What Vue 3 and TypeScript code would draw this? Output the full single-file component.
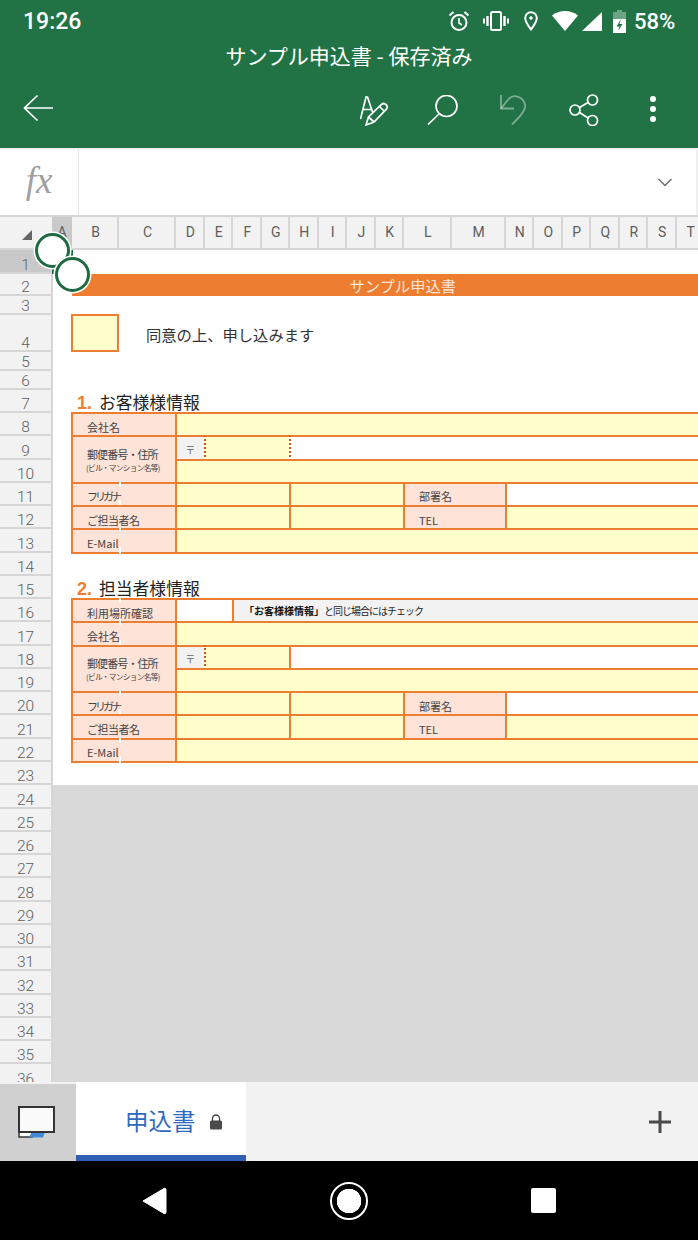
<script setup lang="ts">
type Cell = {
  r: number
  rs?: number
  c: number
  ce: number
  kind: 'label' | 'input' | 'blank' | 'note' | 'zip'
  text?: string
  sub?: string
  dot?: boolean
  seam?: boolean
  // 字間の調整
  track?: number
}

// 列幅 (A〜T)
const colNames = 'ABCDEFGHIJKLMNOPQRST'.split('')
const colWidths = [20, 47, 57, 28.5, 28.5, 28.5, 28.5, 28.5, 28.5, 28.5, 28.5, 47.5, 54, 28.5, 28.5, 28.5, 28.5, 28.5, 28.5, 28.5, 28.5]

// 行の高さ
const std = 23.27
const rowHeights = [24, 22, 19, 37, 19, 19, 23]
for (let i = 8; i <= 36; i++) rowHeights.push(std)

const END = colWidths.length + 1
// A列だけ行見出しの罫線ぶん狭い
const gridCols = colWidths.map((w, i) => (i === 0 ? w - 1 : w) + 'px').join(' ')
const gridRows = rowHeights.slice(0, 23).map(h => h + 'px').join(' ')

// フォーム下部の共通行
const contactRows = (start: number): Cell[] => [
  { r: start, c: 2, ce: 4, kind: 'label', text: 'フリガナ', seam: true, track: -3 },
  { r: start, c: 4, ce: 8, kind: 'input' },
  { r: start, c: 8, ce: 12, kind: 'input' },
  { r: start, c: 12, ce: 14, kind: 'label', text: '部署名' },
  { r: start, c: 14, ce: END, kind: 'blank' },
  { r: start + 1, c: 2, ce: 4, kind: 'label', text: 'ご担当者名', track: -0.5 },
  { r: start + 1, c: 4, ce: 8, kind: 'input' },
  { r: start + 1, c: 8, ce: 12, kind: 'input' },
  { r: start + 1, c: 12, ce: 14, kind: 'label', text: 'TEL' },
  { r: start + 1, c: 14, ce: END, kind: 'input' },
  { r: start + 2, c: 2, ce: 4, kind: 'label', text: 'E-Mail', seam: true },
  { r: start + 2, c: 4, ce: END, kind: 'input' }
]

const cells: Cell[] = [
  // 1. お客様様情報
  { r: 8, c: 2, ce: 4, kind: 'label', text: '会社名' },
  { r: 8, c: 4, ce: END, kind: 'input' },
  { r: 9, rs: 2, c: 2, ce: 4, kind: 'label', text: '郵便番号・住所', sub: '(ビル・マンション名等)', track: -0.9 },
  { r: 9, c: 4, ce: 5, kind: 'zip', text: '〒' },
  { r: 9, c: 5, ce: 8, kind: 'input', dot: true },
  { r: 9, c: 8, ce: END, kind: 'blank', dot: true },
  { r: 10, c: 4, ce: END, kind: 'input' },
  ...contactRows(11),
  // 2. 担当者様情報
  { r: 16, c: 2, ce: 4, kind: 'label', text: '利用場所確認', seam: true },
  { r: 16, c: 4, ce: 6, kind: 'blank' },
  { r: 16, c: 6, ce: END, kind: 'note' },
  { r: 17, c: 2, ce: 4, kind: 'label', text: '会社名', seam: true },
  { r: 17, c: 4, ce: END, kind: 'input' },
  { r: 18, rs: 2, c: 2, ce: 4, kind: 'label', text: '郵便番号・住所', sub: '(ビル・マンション名等)', track: -0.9 },
  { r: 18, c: 4, ce: 5, kind: 'zip', text: '〒' },
  { r: 18, c: 5, ce: 8, kind: 'input', dot: true },
  { r: 18, c: 8, ce: END, kind: 'blank' },
  { r: 19, c: 4, ce: END, kind: 'input' },
  ...contactRows(20)
]

const area = (r: number, rs: number, c: number, ce: number) => ({
  gridArea: `${r} / ${c} / ${r + rs} / ${ce}`
})
</script>

<template>
  <div class="phone">
    <header class="appbar">
      <div class="status">
        <span class="time">19:26</span>
        <svg class="st-alarm" width="22" height="22" viewBox="0 0 22 22" fill="none" stroke="#fff" stroke-width="2">
          <circle cx="11" cy="12.5" r="7.5" />
          <path d="M11 8v5l3 2" stroke-width="1.6" />
          <path d="M1.5 5.5 5.5 2M20.5 5.5 16.5 2" />
        </svg>
        <svg class="st-vib" width="26" height="20" viewBox="0 0 26 20" fill="none" stroke="#fff">
          <rect x="8" y="1" width="10" height="18" rx="1.5" stroke-width="2" />
          <path d="M4.5 5v10M21.5 5v10" stroke-width="2.4" />
          <path d="M1 7.5v5M25 7.5v5" stroke-width="2" />
        </svg>
        <svg class="st-loc" width="14" height="20" viewBox="0 0 14 20" fill="none" stroke="#fff" stroke-width="2">
          <path d="M7 18.5C4 14.5 1.2 11 1.2 7a5.8 5.8 0 0 1 11.6 0c0 4-2.800 7.500-5.800 11.500Z" />
          <circle cx="7" cy="7" r="1.300" fill="#fff" stroke-width="1" />
        </svg>
        <svg class="st-wifi" width="26" height="20" viewBox="0 0 26 20">
          <path d="M13 20 0 4.500C3.500 1.700 8 0 13 0s9.500 1.700 13 4.500Z" fill="#fff" />
        </svg>
        <svg class="st-sig" width="20" height="19" viewBox="0 0 20 19">
          <path d="M0 19 20 0v19Z" fill="#fff" />
        </svg>
        <svg class="st-bat" width="13" height="23" viewBox="0 0 13 23">
          <path d="M4 0h5v2h4v7H0V2h4Z" fill="#fff" opacity=".35" />
          <path d="M0 9h13v14H0Z" fill="#fff" />
          <path d="M8 9 3.500 16.500h3L5 21l4.500-7h-3L8 9Z" fill="#217346" />
        </svg>
        <span class="pct">58%</span>
      </div>
      <div class="title">サンプル申込書 - 保存済み</div>
      <div class="toolbar">
        <svg class="tb-back" width="30" height="28" viewBox="0 0 30 28" fill="none" stroke="#fff" stroke-width="1.700">
          <path d="M30 14H2M14.500 1.500 1.500 14l13 12.500" />
        </svg>
        <svg class="tb-font" width="30" height="30" viewBox="0 0 30 30" fill="none" stroke="#fff" stroke-width="1.700">
          <path d="M0.500 23 6 1h1.500l5 15M3 13.500h9.500" />
          <path d="M6 29 8.500 21 21.500 8.500c1.500-1.300 3.600-1 4.800.3 1.200 1.300 1.200 3.200-.1 4.500L14 26Z" />
          <path d="M8.500 21 14 26M19.500 10.500l5 5" />
        </svg>
        <svg class="tb-search" width="31" height="30" viewBox="0 0 31 30" fill="none" stroke="#fff" stroke-width="1.700">
          <circle cx="19.500" cy="11" r="10.500" />
          <path d="M12 19 1 29.500" />
        </svg>
        <svg class="tb-undo" width="28" height="30" viewBox="0 0 28 30" fill="none" stroke="#fff" stroke-opacity=".42" stroke-width="1.800">
          <path d="M2 0v13.500h13" />
          <path d="M2 13.500 10 3.500c5-4.500 14-2 16 6 1 6-6 13-13 20" />
        </svg>
        <svg class="tb-share" width="30" height="32" viewBox="0 0 30 32" fill="none" stroke="#fff" stroke-width="1.700">
          <circle cx="23.500" cy="6" r="5" />
          <circle cx="6" cy="16" r="5" />
          <circle cx="23.500" cy="26.500" r="5" />
          <path d="M19 8.500 10.500 13.500M10.500 18.500 19 24" />
        </svg>
        <svg class="tb-more" width="8" height="28" viewBox="0 0 8 28" fill="#fff">
          <circle cx="4" cy="4" r="3" />
          <circle cx="4" cy="14" r="3" />
          <circle cx="4" cy="24" r="3" />
        </svg>
      </div>
    </header>

    <div class="formula">
      <div class="fx"><span>fx</span></div>
      <div class="formula-input">
        <svg width="16" height="9" viewBox="0 0 16 9" fill="none" stroke="#6e6e6e" stroke-width="1.500">
          <path d="M1.500 1l6.500 6.500L14.500 1" />
        </svg>
      </div>
    </div>

    <div class="sheet">
      <div class="colhead">
        <div class="corner"><i class="corner-mark"></i></div>
        <div
          v-for="(name, i) in colNames"
          :key="name"
          class="col"
          :class="{ sel: i === 0 }"
          :style="{ width: colWidths[i] + 'px' }"
        >{{ name }}</div>
      </div>

      <div class="body">
        <div class="rowhead">
          <div
            v-for="(h, i) in rowHeights"
            :key="i"
            class="row"
            :class="{ sel: i === 0 }"
            :style="{ height: h + 'px' }"
          ><span>{{ i + 1 }}</span></div>
        </div>

        <div class="canvas">
          <div class="grid" :style="{ gridTemplateColumns: gridCols, gridTemplateRows: gridRows }">
            <div class="banner" :style="area(2, 1, 2, END)">サンプル申込書</div>
            <div class="agree-box" :style="area(4, 1, 2, 3)"></div>
            <div class="agree" :style="area(4, 1, 3, END)">同意の上、申し込みます</div>

            <div class="heading" :style="area(7, 1, 2, END)"><b>1.</b>お客様様情報</div>
            <div class="heading" :style="area(15, 1, 2, END)"><b>2.</b>担当者様情報</div>

            <div
              v-for="(cell, i) in cells"
              :key="i"
              class="cell"
              :class="[cell.kind, { dot: cell.dot, seam: cell.seam, stacked: cell.sub }]"
              :style="area(cell.r, cell.rs ?? 1, cell.c, cell.ce)"
            >
              <template v-if="cell.kind === 'note'">
                <span class="note-text"><strong>「お客様様情報」</strong>と同じ場合にはチェック</span>
              </template>
              <template v-else>
                <span class="txt" :style="cell.track ? { letterSpacing: cell.track + 'px' } : undefined">{{ cell.text }}</span>
                <small v-if="cell.sub">{{ cell.sub }}</small>
              </template>
            </div>
          </div>
          <div class="empty"></div>
        </div>
      </div>

      <!-- 選択範囲とハンドル -->
      <div class="selection"></div>
      <div class="handle h1"></div>
      <div class="handle h2"></div>
    </div>

    <div class="tabs">
      <div class="tab-switch">
        <svg width="37" height="32" viewBox="0 0 37 32">
          <path d="M1 26h13v5H1Z" fill="#fff" stroke="#333" stroke-width="1.500" />
          <path d="M11 31.500l3-6h13l-2 6Z" fill="#3f8bd6" />
          <rect x="1" y="1" width="35" height="25" fill="#fafafa" stroke="#333" stroke-width="2" />
        </svg>
      </div>
      <div class="tab-active">
        <span>申込書</span>
        <svg width="14" height="16" viewBox="0 0 14 16">
          <path d="M3.500 7V4.500a3.500 3.500 0 0 1 7 0V7" fill="none" stroke="#444" stroke-width="1.300" />
          <rect x="1" y="6.500" width="12" height="9" rx="1.500" fill="#4a4a4a" />
        </svg>
      </div>
      <div class="tab-rest">
        <svg width="22" height="22" viewBox="0 0 22 22" stroke="#4a4a4a" stroke-width="3">
          <path d="M0 11h22M11 0v22" />
        </svg>
      </div>
    </div>

    <nav class="navbar">
      <svg width="26" height="28" viewBox="0 0 26 28"><path d="M2 14 23 1.500c1-.5 2 0 2 1v23c0 1-1 1.500-2 1Z" fill="#fff" stroke="#fff" stroke-linejoin="round" /></svg>
      <div class="nav-home"></div>
      <div class="nav-square"></div>
    </nav>
  </div>
</template>

<style scoped>
.phone {
  --jp: "Noto Sans CJK JP", "Noto Sans", sans-serif;
  width: 698px;
  height: 1240px;
  display: flex;
  flex-direction: column;
  overflow: hidden;
  font-family: var(--jp);
  background: #fff;
}

/* ヘッダー */
.appbar {
  height: 148px;
  background: #217346;
  color: #fff;
  flex: none;
}
.status {
  height: 42px;
  display: flex;
  align-items: center;
  padding-left: 23px;
  font-family: Roboto, sans-serif;
  font-weight: 500;
  font-size: 22px;
}
.time { width: 58px; font-size: 23px; }
.st-alarm { margin-left: 367px; }
.st-vib { margin-left: 13px; }
.st-loc { margin-left: 15px; }
.st-wifi { margin-left: 14px; }
.st-sig { margin-left: 4px; }
.st-bat { margin-left: 11px; }
.pct { margin-left: 8px; }

.title {
  height: 30px;
  text-align: center;
  font-size: 21px;
  line-height: 27px;
}
.toolbar {
  height: 76px;
  display: flex;
  align-items: flex-start;
  padding: 17px 0 0 23px;
  box-sizing: border-box;
}
.tb-back { margin-top: 5px; }
.tb-font { margin-left: 307px; margin-top: 7px; }
.tb-search { margin-left: 37px; margin-top: 6px; }
.tb-undo { margin-left: 41px; margin-top: 6px; }
.tb-share { margin-left: 42px; margin-top: 5px; }
.tb-more { margin-left: 50px; margin-top: 6px; }

/* 数式バー */
.formula {
  height: 67px;
  flex: none;
  display: flex;
  border-top: 2px solid #f2f2f2;
  box-sizing: border-box;
}
.fx {
  width: 79px;
  border-right: 1px solid #e4e4e4;
  display: flex;
  align-items: center;
  justify-content: center;
  font-family: "Liberation Serif", serif;
  font-style: italic;
  font-size: 37px;
  color: #a0a0a0;
  padding-bottom: 4px;
  box-sizing: border-box;
}
.formula-input {
  flex: 1;
  display: flex;
  align-items: center;
  justify-content: flex-end;
  padding-right: 23px;
  border-right: 2px solid #f0f0f0;
}

/* シート */
.sheet {
  flex: 1;
  position: relative;
  overflow: hidden;
  display: flex;
  flex-direction: column;
}
.colhead {
  height: 35px;
  flex: none;
  display: flex;
  background: #f2f2f2;
  border-top: 2px solid #d6d6d6;
  border-bottom: 2px solid #d6d6d6;
  box-sizing: border-box;
  font-family: Roboto, sans-serif;
  font-size: 14px;
  color: #5e5e5e;
  overflow: hidden;
}
.corner {
  width: 52px;
  flex: none;
  position: relative;
}
.corner-mark {
  position: absolute;
  left: 22px;
  top: 13px;
  border-left: 10px solid transparent;
  border-bottom: 10px solid #666;
}
.col {
  flex: none;
  box-sizing: border-box;
  border-right: 2px solid #d6d6d6;
  display: flex;
  align-items: center;
  justify-content: center;
  padding: 0 0 2px 2px;
}
.col.sel {
  background: #c9c9c9;
  border-right-color: #c9c9c9;
}

.body {
  flex: 1;
  display: flex;
  min-height: 0;
}
.rowhead {
  width: 53px;
  flex: none;
  background: #f2f2f2;
  border-right: 2px solid #d6d6d6;
  box-sizing: border-box;
  font-family: Roboto, sans-serif;
  font-weight: 300;
  font-size: 15.500px;
  color: #5e5e5e;
}
.row {
  box-sizing: border-box;
  border-bottom: 2px solid #d6d6d6;
  display: flex;
  align-items: flex-end;
  justify-content: center;
  line-height: 13px;
}
.row.sel { background: #c9c9c9; }

.canvas {
  flex: 1;
  min-width: 0;
  display: flex;
  flex-direction: column;
  overflow: hidden;
}
.grid {
  display: grid;
  flex: none;
  width: 645px;
  background: #fff;
}
.empty {
  flex: 1;
  background: #d9d9d9;
}

.banner {
  background: #ed7d31;
  color: #fbe5d6;
  font-size: 15.300px;
  line-height: 22px;
  text-align: center;
}
.agree-box {
  background: #ffffcc;
  border: 2px solid #ed7d31;
  margin: -1px 0 0 -1px;
}
.agree {
  font-size: 15.300px;
  color: #333;
  display: flex;
  align-items: center;
  padding-left: 27px;
  white-space: nowrap;
}
.heading {
  font-size: 16.800px;
  line-height: 24px;
  color: #222;
  padding-left: 5px;
  white-space: nowrap;
}
.heading b {
  color: #ed7d31;
  font-family: "Liberation Sans", sans-serif;
  font-size: 18px;
  margin-right: 7px;
}

.cell {
  margin: -1px;
  border: 2px solid #ed7d31;
  box-sizing: border-box;
  display: flex;
  align-items: center;
  min-width: 0;
  position: relative;
  color: #444;
  white-space: nowrap;
}
.label {
  background: #fde3d8;
  font-size: 11px;
  padding: 4px 0 0 14px;
}
.label.stacked {
  flex-direction: column;
  align-items: flex-start;
  justify-content: center;
  line-height: 15px;
  padding-top: 1px;
}
.label small {
  font-size: 7.700px;
  line-height: 12px;
  margin-left: -1px;
  letter-spacing: -0.7px;
}
.txt { position: relative; z-index: 1; }
.input { background: #ffffcc; }
.blank { background: #fff; }
.zip {
  background: #f2f2f2;
  font-size: 10px;
  justify-content: center;
  color: #666;
  padding-top: 3px;
}
.note {
  background: #f2f2f2;
  padding-left: 11px;
  font-size: 10px;
  color: #222;
  letter-spacing: -1px;
}
.note-text strong { margin-left: -1px; color: #111; letter-spacing: 0; }
.dot {
  border-left: 2px dotted #c8552a;
}
/* B列とC列の境目に出る白い継ぎ目 */
.seam::after {
  content: "";
  position: absolute;
  left: 46px;
  top: -2px;
  bottom: -2px;
  width: 1.500px;
  background: linear-gradient(#fff 0 4px, transparent 4px calc(100% - 7px), #fff calc(100% - 7px));
}

/* セル選択 */
.selection {
  position: absolute;
  left: 52px;
  top: 35px;
  width: 21px;
  height: 24px;
  box-sizing: border-box;
  border: 2px solid #1e6b41;
}
.handle {
  position: absolute;
  width: 35px;
  height: 35px;
  box-sizing: border-box;
  border-radius: 50%;
  background: #fff;
  border: 3px solid #1e6b41;
  box-shadow: 0 0 0 1.500px #fff;
}
.h1 { left: 35px; top: 18px; }
.h2 { left: 55px; top: 42px; }

/* シートタブ */
.tabs {
  height: 79px;
  flex: none;
  display: flex;
  background: #f2f2f2;
  position: relative;
}
.tab-switch {
  width: 76px;
  background: #d0d0d0;
  margin-top: 2px;
  display: flex;
  align-items: flex-start;
  padding: 22px 0 0 18px;
  box-sizing: border-box;
}
.tab-active {
  width: 170px;
  background: #fff;
  border-bottom: 6px solid #2f60b3;
  box-sizing: border-box;
  display: flex;
  align-items: center;
  padding: 3px 0 0 49px;
  font-size: 23.500px;
  color: #2f6bbd;
}
.tab-active svg { margin: 4px 0 0 13px; }
.tab-rest {
  flex: 1;
  display: flex;
  justify-content: flex-end;
  padding: 29px 27px 0 0;
  box-sizing: border-box;
}

/* ナビゲーションバー */
.navbar {
  height: 79px;
  flex: none;
  background: #000;
  display: flex;
  align-items: center;
  padding: 0 142px 0 141px;
  box-sizing: border-box;
  justify-content: space-between;
}
.nav-home {
  width: 38px;
  height: 38px;
  box-sizing: border-box;
  border-radius: 50%;
  border: 2px solid #fff;
  background: radial-gradient(circle, #fff 0 12px, #000 12.500px);
}
.nav-square {
  width: 25px;
  height: 25px;
  border-radius: 2px;
  background: #fff;
}
</style>

<style>
html,
body {
  margin: 0;
  background: #fff;
}
</style>
